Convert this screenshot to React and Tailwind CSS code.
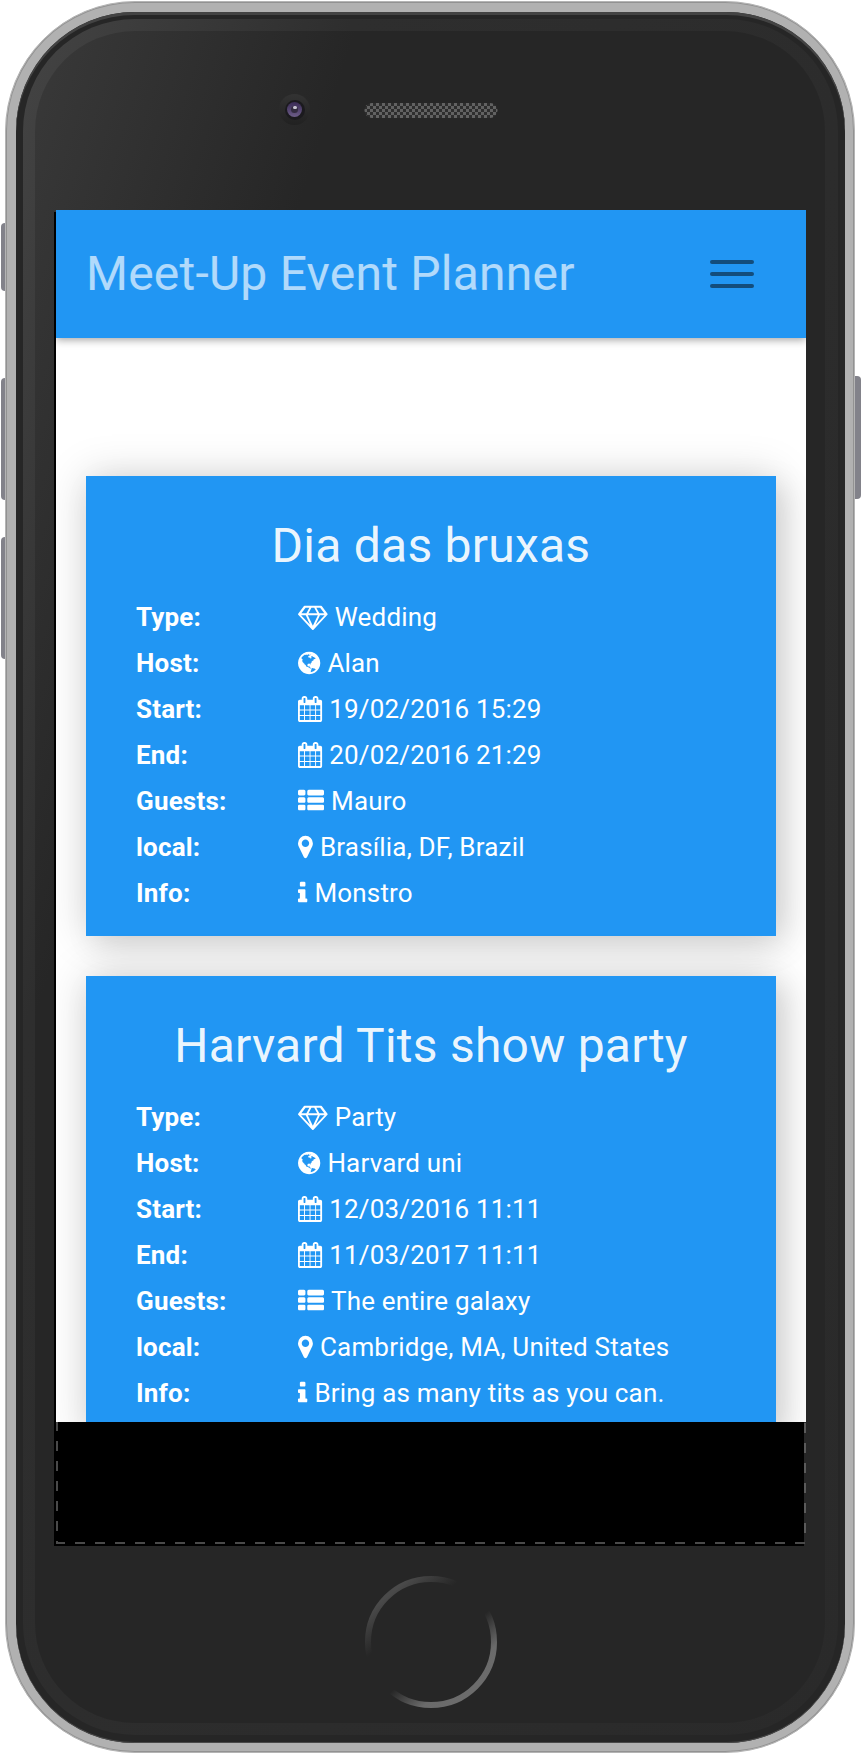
const ICONS = {
  diamond: {
    box: '0 0 2048 1792',
    width: 'w-[29.7px]',
    path: 'M212 768l623 665-300-665h-323zm812 739l349-739h-698zm-444-867l204-384h-262l-288 384h346zm633 793l623-665h-323zm-490-793h602l-204-384h-194zm745 0h346l-288-384h-262zm183-486l384 512q14 18 13 41.5t-17 40.5l-960 1024q-18 20-47 20t-47-20l-960-1024q-16-17-17-40.5t13-41.5l384-512q18-26 51-26h1152q33 0 51 26z',
  },
  globe: {
    box: '128 0 1536 1792',
    width: 'w-[22.3px]',
    path: 'M896 128q209 0 385.5 103t279.5 279.5 103 385.5-103 385.5-279.5 279.5-385.5 103-385.5-103-279.5-279.5-103-385.5 103-385.5 279.5-279.5 385.5-103zm274 521q-2 1-9.5 9.5t-13.5 9.5q2 0 4.5-5t5-11 3.5-7q6-7 22-15 14-6 52-12 34-8 51 11-2-2 9.5-13t14.5-12q3-2 15-4.5t15-7.5l2-22q-12 1-17.5-7t-6.5-21q0 2-6 8 0-7-4.5-8t-11.5 1-9 1q-10-3-15-7.5t-8-16.5-4-15q-2-5-9.5-11t-9.5-10q-1-2-2.5-5.5t-3-6.5-4-5.5-5.5-2.5-7 5-7.5 10-4.5 5q-3-2-6-1.5t-4.5 1-4.5 3-5 3.5q-3 2-8.5 3t-8.5 2q15-5-1-11-10-4-16-3 9-4 7.5-12t-8.5-14h5q-1-4-8.5-8.5t-17.5-8.5-13-6q-8-5-34-9.5t-33-.5q-5 6-4.5 10.5t4 14 3.5 12.5q1 6-5.5 13t-6.5 12q0 7 14 15.5t10 21.5q-3 8-16 16t-16 12q-5 8-1.5 18.5t10.5 16.5q2 2 1.5 4t-3.5 4.5-5.5 4-6.5 3.5l-3 2q-11 5-20.5-6t-13.5-26q-7-25-16-30-23-8-29 1-5-13-41-26-25-9-58-4 6-1 0-15-7-15-19-12 3-6 4-17.5t1-13.5q3-13 12-23 1-1 7-8.5t9.5-13.5.5-6q35 4 50-11 5-5 11.5-17t10.5-17q9-6 14-5.5t14.5 5.5 14.5 5q14 1 15.5-11t-7.5-20q12 1 3-17-4-7-8-9-12-4-27 5-8 4 2 8-1-1-9.5 10.5t-16.5 17.5-16-5q-1-1-5.5-13.5t-9.5-13.5q-8 0-16 15 3-8-11-15t-24-8q19-12-8-27-7-4-20.5-5t-19.5 4q-5 7-5.5 11.5t5 8 10.5 5.5 11.5 4 8.5 3q14 10 8 14-2 1-8.5 3.5t-11.5 4.5-6 4q-3 4 0 14t-2 14q-5-5-9-17.5t-7-16.5q7 9-25 6l-10-1q-4 0-16 2t-20.5 1-13.5-8q-4-8 0-20 1-4 4-2-4-3-11-9.5t-10-8.5q-46 15-94 41 6 1 12-1 5-2 13-6.5t10-5.5q34-14 42-7l5-5q14 16 20 25-7-4-30-1-20 6-22 12 7 12 5 18-4-3-11.5-10t-14.5-11-15-5q-16 0-22 1-146 80-235 222 7 7 12 8 4 1 5 9t2.5 11 11.5-3q9 8 3 19 1-1 44 27 19 17 21 21 3 11-10 18-1-2-9-9t-9-4q-3 5 .5 18.5t10.5 12.5q-7 0-9.5 16t-2.5 35.5-1 23.5l2 1q-3 12 5.5 34.5t21.5 19.5q-13 3 20 43 6 8 8 9 3 2 12 7.5t15 10 10 10.5q4 5 10 22.5t14 23.5q-2 6 9.5 20t10.5 23q-1 0-2.5 1t-2.5 1q3 7 15.5 14t15.5 13q1 3 2 10t3 11 8 2q2-20-24-62-15-25-17-29-3-5-5.5-15.5t-4.5-14.5q2 0 6 1.5t8.5 3.5 7.5 4 2 3q-3 7 2 17.5t12 18.5 17 19 12 13q6 6 14 19.5t0 13.5q9 0 20 10.5t17 19.5q5 8 8 26t5 24q2 7 8.5 13.5t12.5 9.5l16 8 13 7q5 2 18.5 10.5t21.5 11.5q10 4 16 4t14.5-2.5 13.5-3.5q15-2 29 15t21 21q36 19 55 11-2 1 .5 7.5t8 15.5 9 14.5 5.5 8.5q5 6 18 15t18 15q6-4 7-9-3 8 7 20t18 10q14-3 14-32-31 15-49-18 0-1-2.5-5.5t-4-8.5-2.5-8.5 0-7.5 5-3q9 0 10-3.5t-2-12.5-4-13q-1-8-11-20t-12-15q-5 9-16 8t-16-9q0 1-1.5 5.5t-1.5 6.5q-13 0-15-1 1-3 2.5-17.5t3.5-22.5q1-4 5.5-12t7.5-14.5 4-12.5-4.5-9.5-17.5-2.5q-19 1-26 20-1 3-3 10.5t-5 11.5-9 7q-7 3-24 2t-24-5q-13-8-22.5-29t-9.5-37q0-10 2.5-26.5t3-25-5.5-24.5q3-2 9-9.5t10-10.5q2-1 4.5-1.5t4.5 0 4-1.5 3-6q-1-1-4-3-3-3-4-3 7 3 28.5-1.5t27.5 1.5q15 11 22-2 0-1-2.5-9.5t-.5-13.5q5 27 29 9 3 3 15.5 5t17.5 5q3 2 7 5.5t5.5 4.5 5-.5 8.5-6.5q10 14 12 24 11 40 19 44 7 3 11 2t4.5-9.5 0-14-1.5-12.5l-1-8v-18l-1-8q-15-3-18.5-12t1.5-18.5 15-18.5q1-1 8-3.5t15.5-6.5 12.5-8q21-19 15-35 7 0 11-9-1 0-5-3t-7.5-5-4.5-2q9-5 2-16 5-3 7.5-11t7.5-10q9 12 21 2 8-8 1-16 5-7 20.5-10.5t18.5-9.5q7 2 8-2t1-12 3-12q4-5 15-9t13-5l17-11q3-4 0-4 18 2 31-11 10-11-6-20 3-6-3-9.5t-15-5.5q3-1 11.5-.5t10.5-1.5q15-10-7-16-17-5-43 12zm-163 877q206-36 351-189-3-3-12.5-4.5t-12.5-3.5q-18-7-24-8 1-7-2.5-13t-8-9-12.5-8-11-7q-2-2-7-6t-7-5.5-7.5-4.5-8.5-2-10 1l-3 1q-3 1-5.5 2.5t-5.5 3-4 3 0 2.5q-21-17-36-22-5-1-11-5.5t-10.5-7-10-1.5-11.5 7q-5 5-6 15t-2 13q-7-5 0-17.5t2-18.5q-3-6-10.5-4.5t-12 4.5-11.5 8.5-9 6.5-8.5 5.5-8.5 7.5q-3 4-6 12t-5 11q-2-4-11.5-6.5t-9.5-5.5q2 10 4 35t5 38q7 31-12 48-27 25-29 40-4 22 12 26 0 7-8 20.5t-7 21.5q0 6 2 16z',
  },
  calendar: {
    box: '64 0 1664 1792',
    width: 'w-[24.1px]',
    path: 'M192 1664h288v-288h-288v288zm352 0h320v-288h-320v288zm-352-352h288v-320h-288v320zm352 0h320v-320h-320v320zm-352-384h288v-288h-288v288zm736 736h320v-288h-320v288zm-384-736h320v-288h-320v288zm768 736h288v-288h-288v288zm-384-352h320v-320h-320v320zm-352-864v-288q0-13-9.5-22.5t-22.5-9.5h-64q-13 0-22.5 9.5t-9.5 22.5v288q0 13 9.5 22.5t22.5 9.5h64q13 0 22.5-9.5t9.5-22.5zm736 864h288v-320h-288v320zm-384-384h320v-288h-320v288zm384 0h288v-288h-288v288zm32-480v-288q0-13-9.5-22.5t-22.5-9.5h-64q-13 0-22.5 9.5t-9.5 22.5v288q0 13 9.5 22.5t22.5 9.5h64q13 0 22.5-9.5t9.5-22.5zm384-64v1280q0 52-38 90t-90 38h-1408q-52 0-90-38t-38-90v-1280q0-52 38-90t90-38h128v-96q0-66 47-113t113-47h64q66 0 113 47t47 113v96h384v-96q0-66 47-113t113-47h64q66 0 113 47t47 113v96h128q52 0 90 38t38 90z',
  },
  list: {
    box: '0 0 1792 1792',
    width: 'w-[26px]',
    path: 'M512 1248v192q0 40-28 68t-68 28h-320q-40 0-68-28t-28-68v-192q0-40 28-68t68-28h320q40 0 68 28t28 68zm0-512v192q0 40-28 68t-68 28h-320q-40 0-68-28t-28-68v-192q0-40 28-68t68-28h320q40 0 68 28t28 68zm1280 512v192q0 40-28 68t-68 28h-960q-40 0-68-28t-28-68v-192q0-40 28-68t68-28h960q40 0 68 28t28 68zm-1280-1024v192q0 40-28 68t-68 28h-320q-40 0-68-28t-28-68v-192q0-40 28-68t68-28h320q40 0 68 28t28 68zm1280 512v192q0 40-28 68t-68 28h-960q-40 0-68-28t-28-68v-192q0-40 28-68t68-28h960q40 0 68 28t28 68zm0-512v192q0 40-28 68t-68 28h-960q-40 0-68-28t-28-68v-192q0-40 28-68t68-28h960q40 0 68 28t28 68z',
  },
  marker: {
    box: '384 0 1024 1792',
    width: 'w-[14.9px]',
    path: 'M1152 640q0-106-75-181t-181-75-181 75-75 181 75 181 181 75 181-75 75-181zm256 0q0 109-33 179l-364 774q-16 33-47.5 52t-67.5 19-67.5-19-46.5-52l-365-774q-33-70-33-179 0-212 150-362t362-150 362 150 150 362z',
  },
  info: {
    box: '576 0 640 1792',
    width: 'w-[9.3px]',
    path: 'M1216 1344v128q0 26-19 45t-45 19h-512q-26 0-45-19t-19-45v-128q0-26 19-45t45-19h64v-384h-64q-26 0-45-19t-19-45v-128q0-26 19-45t45-19h384q26 0 45 19t19 45v576h64q26 0 45 19t19 45zm-128-1152v192q0 26-19 45t-45 19h-256q-26 0-45-19t-19-45v-192q0-26 19-45t45-19h256q26 0 45 19t19 45z',
  },
};

const EVENTS = [
  {
    title: 'Dia das bruxas',
    rows: [
      ['Type:', 'diamond', 'Wedding'],
      ['Host:', 'globe', 'Alan'],
      ['Start:', 'calendar', '19/02/2016 15:29'],
      ['End:', 'calendar', '20/02/2016 21:29'],
      ['Guests:', 'list', 'Mauro'],
      ['local:', 'marker', 'Brasília, DF, Brazil'],
      ['Info:', 'info', 'Monstro'],
    ],
  },
  {
    title: 'Harvard Tits show party',
    rows: [
      ['Type:', 'diamond', 'Party'],
      ['Host:', 'globe', 'Harvard uni'],
      ['Start:', 'calendar', '12/03/2016 11:11'],
      ['End:', 'calendar', '11/03/2017 11:11'],
      ['Guests:', 'list', 'The entire galaxy'],
      ['local:', 'marker', 'Cambridge, MA, United States'],
      ['Info:', 'info', 'Bring as many tits as you can.'],
    ],
  },
];

function Icon({ name }) {
  const icon = ICONS[name];
  return (
    <svg viewBox={icon.box} className={`${icon.width} h-[26px] shrink-0 overflow-visible`} fill="currentColor" aria-hidden="true">
      <path d={icon.path} />
    </svg>
  );
}

function EventCard({ title, rows }) {
  return (
    <section className="h-[460px] shrink-0 bg-[#2196f3] px-[50px] pt-[46px] text-white shadow-[0_0_40px_rgba(0,0,0,0.17),10px_10px_30px_rgba(0,0,0,0.1)]">
      <h2 className="mb-6 whitespace-nowrap text-center text-[48px] leading-[48px] tracking-[0.24px] text-white/93">{title}</h2>
      <dl>
        {rows.map(([label, icon, value]) => (
          <div key={label} className="flex h-[46px] items-center text-[26px] leading-[46px] tracking-[0.18px]">
            <dt className="w-[162.4px] font-bold">{label}</dt>
            <dd className="flex items-center gap-[6.7px] whitespace-nowrap">
              <Icon name={icon} />
              {value}
            </dd>
          </div>
        ))}
      </dl>
    </section>
  );
}

function Camera() {
  return (
    <div className="flex size-[31px] items-center justify-center rounded-full bg-linear-to-b from-[#333333] to-[#212121]">
      <div className="flex size-[20px] items-center justify-center rounded-full bg-[#1b1a1e]">
        <div className="flex size-[15px] justify-center rounded-full bg-linear-to-b from-[#3a2b55] to-[#6d5d88] pt-[4px]">
          <div className="size-[7px] rounded-full bg-[#332c40]">
            <div className="mx-auto h-[3px] w-[4px] rounded-full bg-[#c9c5d2]" />
          </div>
        </div>
      </div>
    </div>
  );
}

function Speaker() {
  return (
    <svg width="134" height="15" viewBox="0 0 134 15" aria-hidden="true">
      <defs>
        <pattern id="mesh" width="6" height="6" patternUnits="userSpaceOnUse">
          <rect width="6" height="6" fill="#2e2e2e" />
          <rect width="3" height="3" fill="#626262" />
          <rect x="3" y="3" width="3" height="3" fill="#626262" />
        </pattern>
      </defs>
      <rect x="0.5" width="133" height="15" rx="7.5" fill="url(#mesh)" />
    </svg>
  );
}

function HomeButton() {
  return (
    <svg width="132" height="132" viewBox="0 0 132 132" aria-hidden="true">
      <defs>
        <linearGradient id="home" gradientUnits="userSpaceOnUse" x1="25.7" y1="17.5" x2="106.3" y2="114.5">
          <stop offset="0" stopColor="#4a4a4a" />
          <stop offset="0.27" stopColor="#262626" />
          <stop offset="0.6" stopColor="#262626" />
          <stop offset="0.85" stopColor="#6a6a6a" />
          <stop offset="1" stopColor="#6c6c6c" />
        </linearGradient>
      </defs>
      <circle cx="66" cy="66" r="63" fill="none" stroke="url(#home)" strokeWidth="6" />
    </svg>
  );
}

export default function App() {
  return (
    <main className="relative h-[1754px] w-[862px] overflow-hidden bg-white pl-[5px] pt-px font-['Roboto',sans-serif] antialiased">
      <div className="absolute left-px top-[223px] h-[68px] w-[8px] rounded-l-[4px] bg-[#82828a]" />
      <div className="absolute left-px top-[378px] h-[122px] w-[8px] rounded-l-[4px] bg-[#82828a]" />
      <div className="absolute left-px top-[537px] h-[122px] w-[8px] rounded-l-[4px] bg-[#82828a]" />
      <div className="absolute left-[852px] top-[376px] h-[123px] w-[9px] rounded-r-[4px] bg-[#82828a]" />

      <div className="relative h-[1752px] w-[850px] rounded-[130px] border border-[#b4b4b4] bg-[#b1b1b1] p-[10px] shadow-[inset_0_0_0_1px_#929292]">
        <div className="h-[1731px] w-[828.5px] rounded-[119px] bg-[#262626] p-[7px] shadow-[inset_0_3px_0_#434343,inset_0_-1px_0_#4a4a4a]">
          <div className="h-[1716px] w-[814.5px] rounded-[112px] bg-[linear-gradient(108deg,#444444,#2e2e2e_24%,#2a2a2a)] p-[12px]">
            <div className="flex h-[1692px] w-[790px] flex-col rounded-[100px] bg-[linear-gradient(108deg,#393939,#262626_24%)]">
              <div className="flex h-[181px] shrink-0 pl-[244px]">
                <div className="pt-[63px]">
                  <Camera />
                </div>
                <div className="pl-[54px] pt-[72px]">
                  <Speaker />
                </div>
              </div>

              <div className="ml-[19px] h-[1334px] w-[750px] shrink-0 bg-black pl-[2px]">
                <div className="-mt-[2px] flex h-[1212px] w-[750px] flex-col overflow-hidden bg-white">
                  <header className="relative flex h-32 shrink-0 items-center justify-between bg-[#2196f3] pl-[30px] pr-[52px] shadow-[0_2px_8px_rgba(0,0,0,0.36)]">
                    <h1 className="whitespace-nowrap text-[48px] leading-[128px] tracking-[0.24px] text-white/65">Meet-Up Event Planner</h1>
                    <button type="button" aria-label="Menu" className="flex flex-col gap-2">
                      <span className="h-1 w-11 rounded-[2px] bg-[#134d7c]" />
                      <span className="h-1 w-11 rounded-[2px] bg-[#134d7c]" />
                      <span className="h-1 w-11 rounded-[2px] bg-[#134d7c]" />
                    </button>
                  </header>
                  <div className="flex flex-col gap-10 px-[30px] pt-[138px]">
                    {EVENTS.map((event) => (
                      <EventCard key={event.title} title={event.title} rows={event.rows} />
                    ))}
                  </div>
                </div>
                <div className="flex h-[122px] w-[750px] flex-col">
                  <div className="flex grow justify-between">
                    <div className="w-[2px] bg-[repeating-linear-gradient(180deg,#4a4a4a_0_9px,transparent_9px_19px,#4a4a4a_19px_20px)]" />
                    <div className="w-[2px] bg-[repeating-linear-gradient(180deg,#262626_0_1px,#5a5a5a_1px_11px,#262626_11px_20px)]" />
                  </div>
                  <div className="mr-px h-[2px] bg-[repeating-linear-gradient(90deg,#4a4a4a_0_9px,transparent_9px_19px,#4a4a4a_19px_20px)]" />
                </div>
              </div>

              <div className="flex justify-center pl-[2px] pt-[30px]">
                <HomeButton />
              </div>
            </div>
          </div>
        </div>
      </div>
    </main>
  );
}
